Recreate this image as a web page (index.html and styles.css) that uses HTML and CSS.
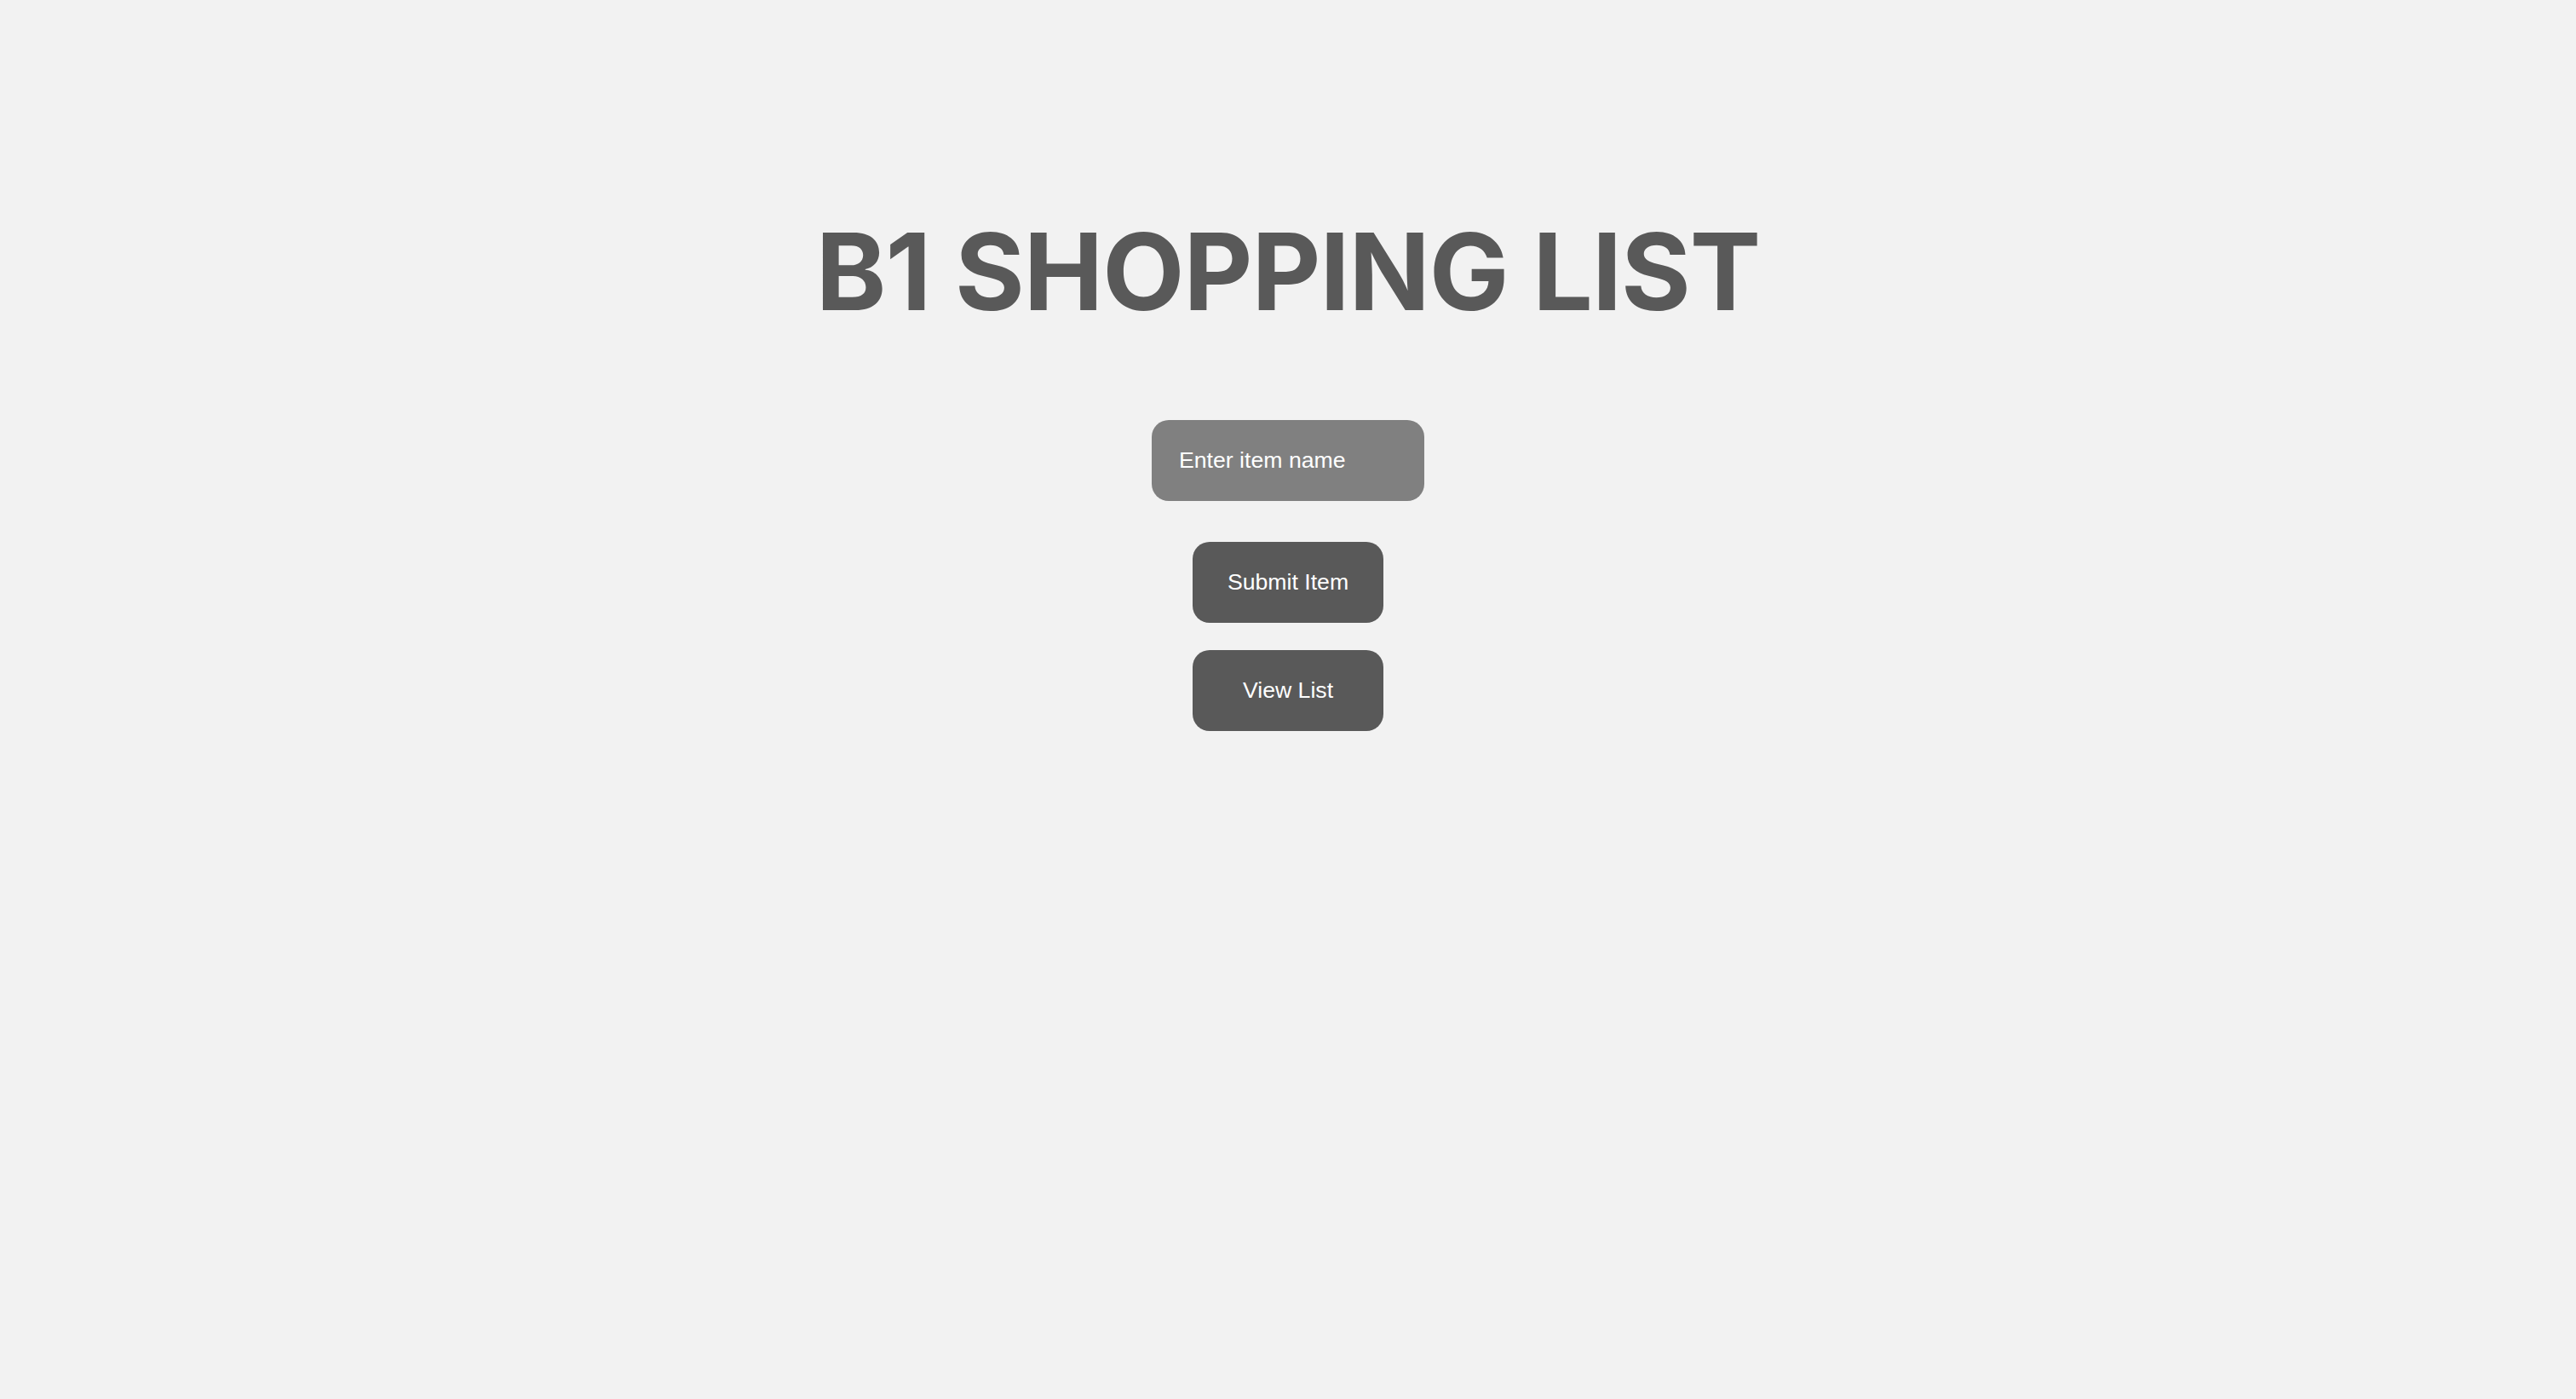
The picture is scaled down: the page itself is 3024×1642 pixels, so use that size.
FILE: index.html
```html
<!DOCTYPE html>
<html>
<head>
<meta charset="utf-8">
<title>B1 Shopping List</title>
<link rel="stylesheet" href="styles.css">
</head>
<body>
<main class="page">
  <h1 class="title">B1 SHOPPING LIST</h1>
  <input class="item-input" type="text" placeholder="Enter item name">
  <div class="actions">
    <button class="btn">Submit Item</button>
    <button class="btn">View List</button>
  </div>
</main>
</body>
</html>
```

FILE: styles.css
```css
html, body {
  margin: 0;
  padding: 0;
  background: #f2f2f2;
}
.page {
  display: flex;
  flex-direction: column;
  align-items: center;
  padding-top: 256px;
  min-height: 1642px;
  box-sizing: border-box;
}
.title {
  margin: 0 0 112px;
  font-family: Inter, "Liberation Sans", sans-serif;
  font-weight: 700;
  font-size: 125px;
  line-height: 1;
  color: #595959;
  letter-spacing: -1px;
}
.item-input {
  width: 320px;
  height: 95px;
  box-sizing: border-box;
  padding: 0 32px;
  border: none;
  border-radius: 20px;
  background: #808080;
  color: #ffffff;
  font-family: "Liberation Sans", Arial, sans-serif;
  font-size: 26.67px;
  outline: none;
}
.item-input::placeholder {
  color: #ffffff;
  opacity: 1;
}
.actions {
  display: flex;
  flex-direction: column;
  gap: 32px;
  margin-top: 48px;
}
.btn {
  width: 224px;
  height: 95px;
  border: none;
  border-radius: 20px;
  background: #595959;
  color: #ffffff;
  font-family: "Liberation Sans", Arial, sans-serif;
  font-size: 26.67px;
  cursor: pointer;
}
```
